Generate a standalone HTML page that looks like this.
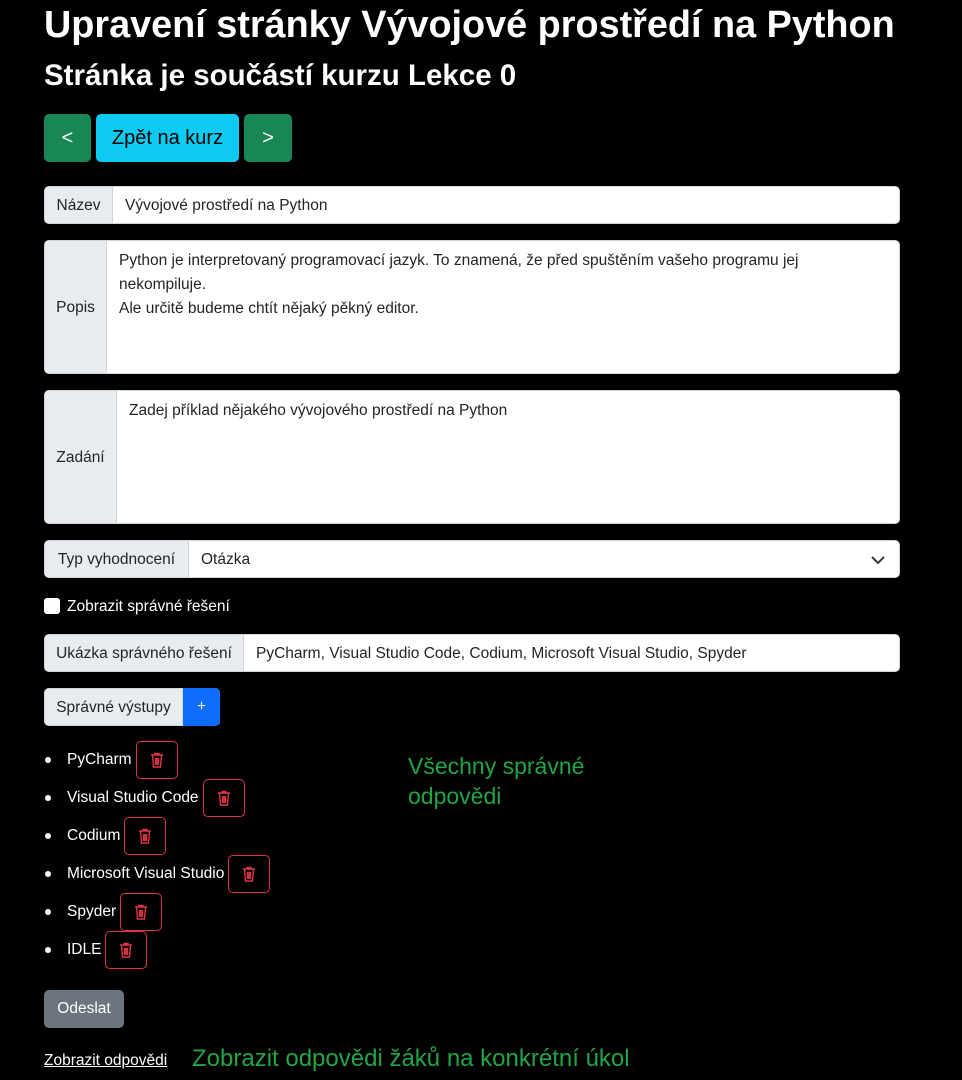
<!DOCTYPE html>
<html><head><meta charset="utf-8"><style>
body{margin:0;background:#000;width:962px;height:1080px;overflow:hidden;position:relative;font-family:"Liberation Sans",sans-serif;color:#fff;}
.a{position:absolute;}
.h1{left:44px;top:4px;font-size:37.8px;font-weight:bold;white-space:nowrap;}
.h2{left:44px;top:59px;font-size:29.5px;font-weight:bold;white-space:nowrap}
.btn{position:absolute;border-radius:5px;display:flex;align-items:center;justify-content:center;box-sizing:border-box;}
.g{background:#198754;color:#fff;font-size:20px;top:114px;height:48px;}
.grp{position:absolute;left:44px;width:856px;display:flex;border:1px solid #ced4da;border-radius:5px;background:#fff;box-sizing:border-box;overflow:hidden;font-size:15.5px;color:#212529}
.lab{background:#e9ecef;border-right:1px solid #ced4da;display:flex;align-items:center;justify-content:center;box-sizing:border-box;flex:none;white-space:nowrap;padding-top:2px}
.inp{padding-left:12px;display:flex;align-items:center;white-space:nowrap;padding-top:2px}
.ta{padding:8px 12px;line-height:24px}
ul{position:absolute;left:0;top:741px;margin:0;padding:0;list-style:none}
li{height:38px;display:flex;align-items:center;font-size:15.5px;position:relative;padding-left:67px}
li:before{content:"";position:absolute;left:45px;top:16px;width:6px;height:6px;border-radius:50%;background:#fff}
.del{width:42px;height:38px;border:1px solid #dc3545;border-radius:5px;box-sizing:border-box;display:flex;align-items:center;justify-content:center;margin-left:4px}
.green{color:#22a546;font-size:23px}
</style></head><body>
<div class="a h1">Upravení stránky Vývojové prostředí na Python</div>
<div class="a h2">Stránka je součástí kurzu Lekce 0</div>
<div class="btn g" style="left:44px;width:47px">&lt;</div>
<div class="btn" style="left:96px;width:143px;top:114px;height:48px;background:#0dcaf0;color:#000;font-size:20px">Zpět na kurz</div>
<div class="btn g" style="left:244px;width:48px">&gt;</div>

<div class="grp" style="top:186px;height:38px"><div class="lab" style="width:68px">Název</div><div class="inp">Vývojové prostředí na Python</div></div>
<div class="grp" style="top:240px;height:134px"><div class="lab" style="width:62px">Popis</div><div class="ta">Python je interpretovaný programovací jazyk. To znamená, že před spuštěním vašeho programu jej<br>nekompiluje.<br>Ale určitě budeme chtít nějaký pěkný editor.</div></div>
<div class="grp" style="top:390px;height:134px"><div class="lab" style="width:72px">Zadání</div><div class="ta">Zadej příklad nějakého vývojového prostředí na Python</div></div>
<div class="grp" style="top:540px;height:38px"><div class="lab" style="width:144px">Typ vyhodnocení</div><div class="inp" style="flex:1">Otázka</div><svg width="14" height="10" style="margin:14px 14px 0 0"><path d="M1 2l6 6 6-6" stroke="#343a40" stroke-width="2" fill="none"/></svg></div>
<div class="a" style="left:44px;top:598px;width:16px;height:16px;background:#fff;border-radius:3px"></div>
<div class="a" style="left:67px;top:598px;font-size:15.5px">Zobrazit správné řešení</div>
<div class="grp" style="top:634px;height:38px"><div class="lab" style="width:199px">Ukázka správného řešení</div><div class="inp">PyCharm, Visual Studio Code, Codium, Microsoft Visual Studio, Spyder</div></div>
<div class="grp" style="top:688px;height:38px;width:176px;border:none"><div class="lab" style="width:139px;border:1px solid #ced4da;border-radius:5px 0 0 5px">Správné výstupy</div><div style="flex:1;background:#0d6efd;color:#fff;display:flex;align-items:center;justify-content:center">+</div></div>
<ul>
<li>PyCharm<span class="del">TR</span></li>
<li>Visual Studio Code<span class="del">TR</span></li>
<li>Codium<span class="del">TR</span></li>
<li>Microsoft Visual Studio<span class="del">TR</span></li>
<li>Spyder<span class="del">TR</span></li>
<li>IDLE<span class="del">TR</span></li>
</ul>
<div class="a green" style="left:408px;top:751px;line-height:30px">Všechny správné<br>odpovědi</div>
<div class="btn" style="left:44px;top:990px;width:80px;height:38px;background:#6c757d;font-size:15.5px">Odeslat</div>
<div class="a" style="left:44px;top:1052px;font-size:15.5px;text-decoration:underline">Zobrazit odpovědi</div>
<div class="a green" style="left:192px;top:1045px;font-size:24px">Zobrazit odpovědi žáků na konkrétní úkol</div>
<script>
document.querySelectorAll('.del').forEach(function(e){e.innerHTML='<svg width="14" height="16" viewBox="0 0 14 16"><path d="M1 3h12M5 3V1.5h4V3M2.5 3l1 12h7l1-12M5.5 6v7M7 6v7M8.5 6v7" stroke="#dc3545" stroke-width="1.4" fill="none"/></svg>';});
</script>
</body></html>
